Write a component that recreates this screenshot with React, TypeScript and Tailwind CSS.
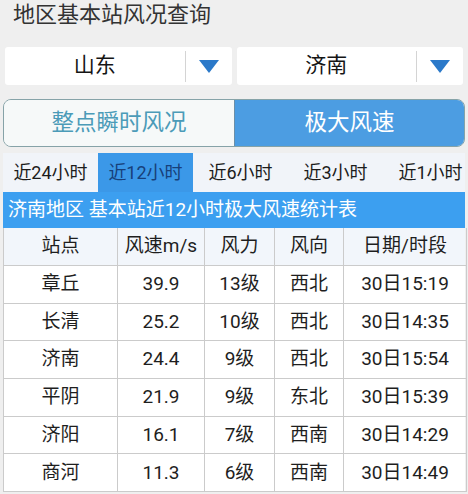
import React from 'react';

// Data
const tabs = ['近24小时', '近12小时', '近6小时', '近3小时', '近1小时'];
const activeTab = 1;

const headers = ['站点', '风速m/s', '风力', '风向', '日期/时段'];

const rows: string[][] = [
  ['章丘', '39.9', '13级', '西北', '30日15:19'],
  ['长清', '25.2', '10级', '西北', '30日14:35'],
  ['济南', '24.4', '9级', '西北', '30日15:54'],
  ['平阴', '21.9', '9级', '东北', '30日15:39'],
  ['济阳', '16.1', '7级', '西南', '30日14:29'],
  ['商河', '11.3', '6级', '西南', '30日14:49'],
];

// Dropdown box
const Select = ({ value }: { value: string }) => (
  <div className="flex-1 h-[38px] bg-white rounded-[3px] flex items-center">
    <div className="flex-1 text-center text-[21px] text-[#151515]">{value}</div>
    <div className="w-px h-[31px] bg-[#d4d4d4]" />
    <div className="w-[46px] flex justify-center">
      <svg width="20" height="13" viewBox="0 0 20 13">
        <polygon points="0,0 20,0 10,13" fill="#2b79c9" />
      </svg>
    </div>
  </div>
);

const App = () => {
  return (
    <div
      className="w-[468px] h-[494px] overflow-hidden bg-[#efefef]"
      style={{ fontFamily: 'Roboto, "Noto Sans CJK SC", sans-serif' }}
    >
      {/* Title */}
      <div className="pt-[1px] pl-[13px] text-[22px] leading-[28px] text-[#333]">地区基本站风况查询</div>

      {/* Province / city selectors */}
      <div className="mt-[18px] px-[5px] flex gap-[5px]">
        <Select value="山东" />
        <Select value="济南" />
      </div>

      {/* Mode switch */}
      <div className="mt-[14px] mx-[3px] h-[48px] flex rounded-[8px] overflow-hidden border border-[#86a3a8]">
        <div className="w-[230px] bg-[#f6f9f9] flex items-center justify-center text-[22.5px] text-[#4b9bb8]">
          整点瞬时风况
        </div>
        <div className="flex-1 bg-[#4c9de2] border-l border-[#6b8fa8] flex items-center justify-center text-[22.5px] text-white">
          极大风速
        </div>
      </div>

      {/* Period tabs */}
      <div className="mt-[6px] mx-[3px] h-[39px] flex overflow-hidden bg-[#f1f4f9]">
        {tabs.map((t, i) => (
          <div
            key={t}
            className={`w-[95px] shrink-0 flex items-center justify-center text-[18px] ${
              i === activeTab ? 'bg-[#3b98e8] text-[#17407a]' : 'text-[#1c1c1c]'
            }`}
          >
            {t}
          </div>
        ))}
      </div>

      {/* Table caption */}
      <div className="mx-[3px] h-[36px] bg-[#3c9ff0] flex items-center pl-[5px] text-[19px] text-white whitespace-nowrap">
        济南地区 基本站近12小时极大风速统计表
      </div>

      {/* Table */}
      <div className="mx-[3px] border-l border-[#cbcbcb] bg-white">
        <div className="grid grid-cols-[114px_87px_70px_69px_123px] h-[38px] bg-[#f2f6fb]">
          {headers.map((h) => (
            <div
              key={h}
              className="flex items-center justify-center border-r border-b border-[#cbcbcb] text-[19px] text-[#1e1e1e]"
            >
              {h}
            </div>
          ))}
        </div>
        {rows.map((r) => (
          <div key={r[0]} className="grid grid-cols-[114px_87px_70px_69px_123px] h-[37.7px]">
            {r.map((c, j) => (
              <div
                key={j}
                className="flex items-center justify-center border-r border-b border-[#cbcbcb] text-[19px] text-[#1e1e1e]"
              >
                {c}
              </div>
            ))}
          </div>
        ))}
      </div>
    </div>
  );
};

export default App;
